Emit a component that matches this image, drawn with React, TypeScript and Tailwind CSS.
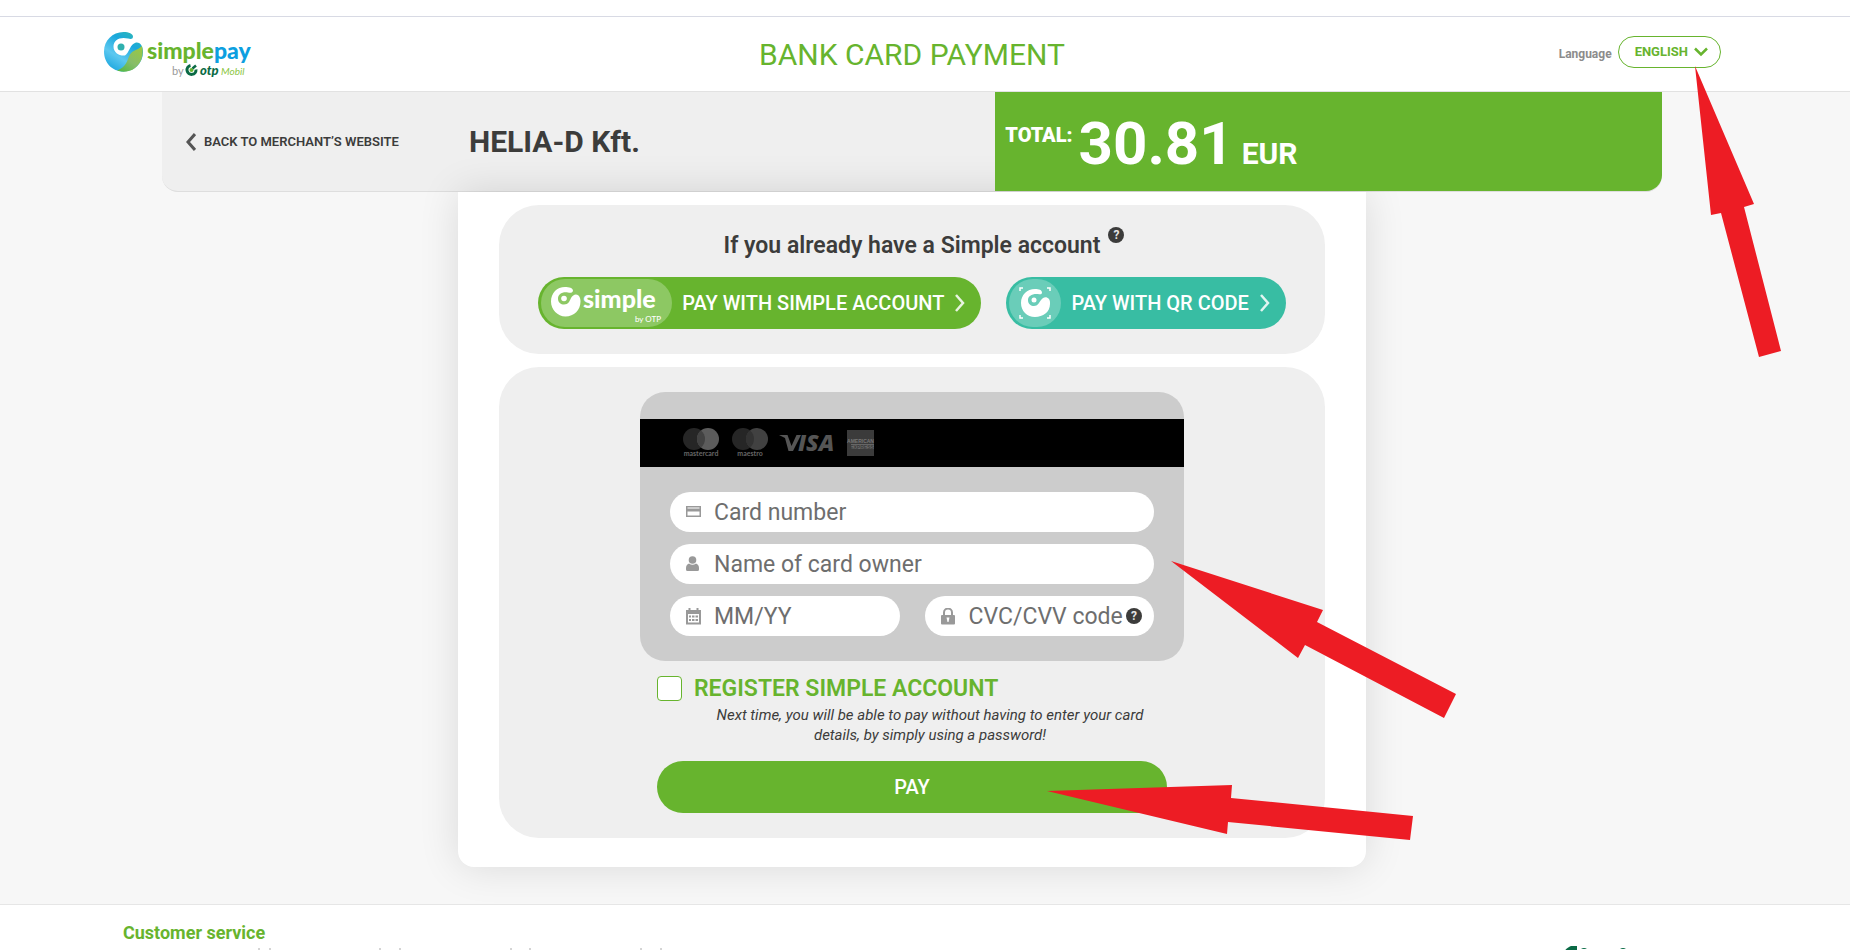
import React from "react";

const SimplePayLogo = () => (
  <svg viewBox="0 0 150 50" className="h-[50px] w-[150px]" role="img" aria-label="simplepay by otp Mobil">
    <defs>
      <linearGradient id="blue" x1="0.8" y1="0" x2="0.2" y2="1">
        <stop offset="0" stopColor="#2fb8b4" />
        <stop offset="0.3" stopColor="#1aa8dc" />
        <stop offset="0.65" stopColor="#5cc8f0" />
        <stop offset="1" stopColor="#18a5dd" />
      </linearGradient>
      <linearGradient id="leaf" x1="1" y1="0" x2="0.2" y2="1">
        <stop offset="0" stopColor="#9dc93c" />
        <stop offset="0.6" stopColor="#86bd6a" />
        <stop offset="1" stopColor="#58b947" />
      </linearGradient>
    </defs>
    <path
      fill="url(#blue)"
      d="M20.500 2C26 2 30 4 30 6.500C30 9 28 9.500 25 8.500C17 6.500 10.500 10 10.500 16.500C10.500 22.500 16 26 22 25.500C26 23 27 14 33 12.500C38 12 40 17 40 22C40 33 31.500 41.500 20.500 41.500C9 41.500 1 32.500 1 21.500C1 10.500 9.500 2 20.500 2Z"
    />
    <path fill="url(#leaf)" d="M39 16C41 25 38.500 33 32 38C27 42 19 42.500 14 40.500C24 37 24 30 27 24.500C30 19.500 34 21 39 16Z" />
    <circle cx="18" cy="17" r="3.500" fill="#2fb0ae" />
    <text x="44" y="29" fontFamily="Lato, sans-serif" fontWeight="900" fontSize="23" fill="#67b42e">
      simple<tspan fill="#0d9fe0">pay</tspan>
    </text>
    <text x="69" y="45" fontFamily="Lato, sans-serif" fontSize="11" fill="#999999">by</text>
    <path d="M87.500 35.500A4.500 4.500 0 1 0 93 39.500" fill="none" stroke="#0a6a45" strokeWidth="3" />
    <circle cx="88.500" cy="40" r="2" fill="#67b42e" />
    <path d="M89.500 38.500L93 35.500" stroke="#0a6a45" strokeWidth="2.500" />
    <text x="97" y="45" fontFamily="Lato, sans-serif" fontWeight="900" fontStyle="italic" fontSize="13" fill="#0a6a45">otp</text>
    <text x="118" y="45" fontFamily="Lato, sans-serif" fontStyle="italic" fontSize="10" fill="#8cc63f">Mobil</text>
  </svg>
);

const ChevronLeft = () => (
  <svg viewBox="0 0 10 18" className="h-[18px] w-[10px]" fill="none" stroke="#555555" strokeWidth="3" aria-hidden="true">
    <path d="M9 1L2 9L9 17" />
  </svg>
);
const ChevronRight = () => (
  <svg viewBox="0 0 10 18" className="ml-[11px] h-[18px] w-[10px]" fill="none" stroke="#ffffff" strokeOpacity="0.85" strokeWidth="2.500" aria-hidden="true">
    <path d="M1 1L8 9L1 17" />
  </svg>
);
const ChevronDown = () => (
  <svg viewBox="0 0 14 10" className="h-[10px] w-[14px]" fill="none" stroke="currentColor" strokeWidth="2.500" aria-hidden="true">
    <path d="M1 1.500L7 7.500L13 1.500" />
  </svg>
);

const Help = ({ className }: { className: string }) => (
  <button type="button" aria-label="Help" className={className}>
    <span className="flex size-4 items-center justify-center rounded-full bg-[#3c3c3b] text-xs leading-4 font-bold text-[#e4e4e4]">?</span>
  </button>
);

const CardBrands = () => (
  <svg viewBox="0 0 200 32" className="h-8 w-[200px]" role="img" aria-label="Mastercard, Maestro, Visa, American Express">
    <circle cx="14" cy="12" r="11" fill="#262626" />
    <circle cx="28" cy="12" r="11" fill="#5c5c5c" />
    <path d="M21 3.500A11 11 0 0 1 21 20.500A11 11 0 0 1 21 3.500Z" fill="#424242" />
    <text x="21" y="29" textAnchor="middle" fontFamily="Lato, sans-serif" fontWeight="700" fontSize="7" fill="#666666">mastercard</text>
    <circle cx="63" cy="12" r="11" fill="#262626" />
    <circle cx="77" cy="12" r="11" fill="#414141" />
    <path d="M70 3.500A11 11 0 0 1 70 20.500A11 11 0 0 1 70 3.500Z" fill="#333333" />
    <text x="70" y="29" textAnchor="middle" fontFamily="Lato, sans-serif" fontWeight="700" fontSize="7" fill="#666666">maestro</text>
    <path d="M99 8H107.500L111.500 19L116.500 8H121L113 24H108.500L105 11Z" fill="#555555" />
    <text x="118" y="24" fontFamily="Open Sans, sans-serif" fontWeight="800" fontStyle="italic" fontSize="23" fill="#555555">ISA</text>
    <rect x="167" y="3" width="27" height="26" fill="#3b3b3b" />
    <text x="180.500" y="15.500" textAnchor="middle" fontFamily="Liberation Sans, sans-serif" fontWeight="700" fontSize="5" fill="#777777">AMERICAN</text>
    <rect x="171" y="17" width="23" height="5" fill="#666666" />
    <text x="182" y="21.500" textAnchor="middle" fontFamily="Liberation Sans, sans-serif" fontWeight="700" fontSize="5" fill="#3b3b3b">EXPRESS</text>
  </svg>
);

const CardIcon = () => (
  <svg viewBox="0 0 16 16" className="size-4" fill="#999999" aria-hidden="true">
    <path fillRule="evenodd" d="M0 2H15V13H0ZM1.500 3.500V4.500H13.500V3.500ZM1.500 7.500V11.500H13.500V7.500Z" />
  </svg>
);
const PersonIcon = () => (
  <svg viewBox="0 0 16 16" className="size-4" fill="#999999" aria-hidden="true">
    <circle cx="6.500" cy="4" r="3.800" />
    <path d="M3 7.500Q6.500 10 10 7.500Q13 8.500 13 12V13.500Q13 15 11.500 15H1.500Q0 15 0 13.500V12Q0 8.500 3 7.500Z" />
  </svg>
);
const CalendarIcon = () => (
  <svg viewBox="0 0 16 17" className="h-[17px] w-4" fill="#999999" aria-hidden="true">
    <path fillRule="evenodd" d="M2.500 0H4.500V2H10.500V0H12.500V2H15V16.500H0V2H2.500ZM2 6V14.500H13V6Z" />
    <path d="M3 7.500H5V9.500H3ZM6 7.500H8.500V9.500H6ZM9.500 7.500H12V9.500H9.500ZM3 11H5V13H3ZM6 11H8.500V13H6ZM9.500 11H12V13H9.500Z" />
  </svg>
);
const LockIcon = () => (
  <svg viewBox="0 0 16 17" className="h-[17px] w-4" aria-hidden="true">
    <path d="M3 8V4.500A4 4 0 0 1 11 4.500V8" fill="none" stroke="#999999" strokeWidth="2" />
    <rect y="7" width="14" height="9.500" rx="1" fill="#999999" />
    <path d="M5.500 9.500H8.500L7.500 14H6.500Z" fill="#ffffff" />
  </svg>
);

const Field = ({ id, label, icon, className, children }: { id: string; label: string; icon: React.ReactNode; className: string; children?: React.ReactNode }) => (
  <div className={`flex h-10 items-center rounded-full bg-white pl-4 ${className}`}>
    <label htmlFor={id} aria-label={label}>{icon}</label>
    <input
      id={id}
      placeholder={label}
      className="ml-3 h-10 min-w-0 flex-1 bg-transparent text-[23px] text-[#444444] outline-none placeholder:text-[#6e6e6e]"
    />
    {children}
  </div>
);

const Arrow = ({ className, viewBox, points }: { className: string; viewBox: string; points: string }) => (
  <svg viewBox={viewBox} className={`pointer-events-none absolute z-20 ${className}`} aria-hidden="true">
    <polygon points={points} fill="#ed1c24" />
  </svg>
);

export default function App() {
  return (
    <div className="relative h-screen overflow-hidden bg-white font-[Roboto,sans-serif] text-[#3c3c3b]">
      <div className="h-[17px] border-b border-[#d8dae4]" />
      <header className="border-b border-[#e2e2e2] pr-[26px]">
        <div className="mx-auto grid h-[74px] max-w-[1618px] grid-cols-[1fr_auto_1fr] items-center pt-[2px]">
          <a href="#home" className="justify-self-start">
            <SimplePayLogo />
          </a>
          <h1 className="text-3xl text-[#67b42e]">BANK CARD PAYMENT</h1>
          <div className="flex items-center gap-[6px] justify-self-end pb-[6px]">
            <span className="pt-1 text-xs font-bold text-[#8c8c8c]">Language</span>
            <button type="button" className="flex h-8 items-center gap-[6px] rounded-full border border-[#67b42e] pr-3 pl-4 text-[13px] font-bold text-[#67b42e]">
              ENGLISH
              <ChevronDown />
            </button>
          </div>
        </div>
      </header>

      <main className="bg-[#f7f7f7] pr-[26px] pb-[37px]">
        <section className="mx-auto flex h-[100px] max-w-[1500px] rounded-b-2xl border-b border-[#dedede] bg-[#efefef]">
          <div className="flex w-5/9 items-center">
            <a href="#merchant" className="flex w-[307px] items-center gap-2 pl-6 text-[13px] font-semibold">
              <ChevronLeft />
              BACK TO MERCHANT’S WEBSITE
            </a>
            <h2 className="text-3xl font-bold">HELIA-D Kft.</h2>
          </div>
          <div className="relative z-10 flex w-4/9 rounded-br-2xl bg-[#67b42e] pl-[10px] font-bold text-white">
            <span className="pt-[29px] text-xl font-black">TOTAL:</span>
            <span className="flex items-baseline gap-1 pt-[22px] pl-[6px]">
              <span className="text-6xl">30.81</span>
              <span className="pl-1 text-3xl">EUR</span>
            </span>
          </div>
        </section>

        <section className="mx-auto flex max-w-[908px] flex-col gap-[13px] rounded-b-2xl bg-white px-[41px] pt-[13px] pb-[29px] shadow-[0_0_40px_rgba(0,0,0,0.12)]">
          <div className="flex h-[149px] flex-col items-center rounded-[40px] bg-[#efefef] pt-[25px]">
            <h3 className="relative text-[23px] leading-8 font-semibold">
              If you already have a Simple account
              <Help className="absolute -top-[3px] left-full ml-2 flex" />
            </h3>
            <div className="mt-[15px] flex gap-[25px]">
              <button type="button" className="flex h-[52px] items-center rounded-full bg-[#67b42e] pr-4 pl-[3px] text-xl font-medium text-white">
                <span className="flex h-12 w-[131px] items-center justify-center rounded-full bg-[#8dc863]">
                  <svg viewBox="0 0 114 42" className="h-[42px] w-[114px]" aria-hidden="true">
                    <path
                      fill="#ffffff"
                      d="M15 5C19 5 23 6 23 8.500C23 11 20 11 18 10.500C12 9.500 8 12.500 8 16.500C8 20.500 11 22.500 14 22.500C18.500 22.500 19.500 19 21 16C23 12.500 26 11.500 28.500 13.500C30 15 30.500 17 30.500 19.500C30.500 28 24 34.500 15.500 34.500C7.500 34.500 1 27.500 1 19.500C1 11 7 5 15 5Z"
                    />
                    <circle cx="14" cy="16.500" r="2.800" fill="#ffffff" />
                    <text x="33" y="26" fontFamily="Lato, sans-serif" fontWeight="900" fontSize="25" fill="#ffffff">simple</text>
                    <text x="111" y="40" textAnchor="end" fontFamily="Lato, sans-serif" fontSize="8" fill="#ffffff">by OTP</text>
                  </svg>
                </span>
                <span className="pl-[10px]">PAY WITH SIMPLE ACCOUNT</span>
                <ChevronRight />
              </button>
              <button type="button" className="flex h-[52px] items-center rounded-full bg-[#38bda3] pr-4 pl-[3px] text-xl font-medium text-white">
                <span className="flex h-12 w-[52px] items-center justify-center rounded-full bg-[#6acdb9]">
                  <svg viewBox="0 0 32 32" className="size-8" aria-hidden="true">
                    <path d="M1 4V1H4M28 1H31V4M31 28V31H28M4 31H1V28" fill="none" stroke="#ffffff" strokeWidth="1.500" />
                    <path fill="#ffffff" d="M16 2C20 2 23 3 23 5.500C23 7.500 21 7.500 19 7C13 6.500 9 9 9 13C9 17 12 19 15 19C19 19 20 15.500 22 13C24 10 27.500 9 30 12C31 13.500 31 15 31 17C31 25 24 30 16 30C8 30 2 24 2 16C2 8 8 2 16 2Z" />
                    <circle cx="15" cy="13" r="2.500" fill="#ffffff" />
                  </svg>
                </span>
                <span className="pl-[10px]">PAY WITH QR CODE</span>
                <ChevronRight />
              </button>
            </div>
          </div>

          <form className="flex flex-col items-center rounded-[40px] bg-[#efefef] pt-[25px] pb-[25px]" onSubmit={(e) => e.preventDefault()}>
            <div className="w-full max-w-[544px] rounded-[25px] bg-[#cccccc] pt-[27px] pb-[25px]">
              <div className="flex h-12 items-center bg-black pl-10">
                <CardBrands />
              </div>
              <div className="grid grid-cols-2 gap-x-[25px] gap-y-3 px-[30px] pt-[25px]">
                <Field id="number" label="Card number" icon={<CardIcon />} className="col-span-2" />
                <Field id="owner" label="Name of card owner" icon={<PersonIcon />} className="col-span-2" />
                <Field id="expiry" label="MM/YY" icon={<CalendarIcon />} className="" />
                <Field id="cvc" label="CVC/CVV code" icon={<LockIcon />} className="pr-3">
                  <Help className="flex" />
                </Field>
              </div>
            </div>

            <div className="mt-[15px] flex w-full max-w-[510px] flex-col">
              <div className="flex h-[25px] items-center gap-3">
                <input id="register" type="checkbox" className="size-[25px] appearance-none rounded-sm border border-[#67b42e] bg-white checked:bg-[#67b42e]" />
                <label htmlFor="register" className="text-[23px] leading-6 font-semibold text-[#67b42e]">REGISTER SIMPLE ACCOUNT</label>
              </div>
              <p className="mt-1 pr-4 pl-[52px] text-center text-[15px] leading-5 italic">
                Next time, you will be able to pay without having to enter your card details, by simply using a password!
              </p>
              <button type="submit" className="mt-4 h-[52px] rounded-full bg-[#67b42e] text-xl font-medium text-white">PAY</button>
            </div>
          </form>
        </section>
      </main>

      <footer className="border-t border-[#e6e6e6] pr-[26px]">
        <div className="mx-auto flex max-w-[1578px] justify-between pt-[14px]">
          <div>
            <h4 className="text-lg font-bold text-[#67b42e]">Customer service</h4>
            <svg viewBox="0 0 560 4" className="h-1 w-[560px]" aria-hidden="true">
              <path d="M136 1V4M147 1V4M257 1V4M277 1V4M388 1V4M407 1V4M518 1V4M538 1V4" stroke="#aaaaaa" strokeWidth="1" />
            </svg>
          </div>
          <svg viewBox="0 0 140 40" className="mt-[27px] h-10 w-[140px]" aria-hidden="true">
            <path d="M16 0H10C5 2 2 6 0 12H16Z" fill="#0a6a45" />
            <path d="M20 3Q23 1 26 3ZM59 3Q62 1 65 3Z" fill="#0a6a45" />
          </svg>
        </div>
      </footer>

      <Arrow className="top-[66px] left-[1695px] h-[291px] w-[87px]" viewBox="0 0 87 291" points="0,0 59,138 49,141 86,285 64,291 26,147 16,149" />
      <Arrow className="top-[561px] left-[1171px] h-[157px] w-[285px]" viewBox="0 0 285 157" points="0,0 152,49 146,61 285,133 273,157 134,84 127,97" />
      <Arrow className="top-[785px] left-[1047px] h-[56px] w-[366px]" viewBox="0 0 366 56" points="0,6 185,0 184,13 366,31 363,55 181,37 180,49" />
    </div>
  );
}
